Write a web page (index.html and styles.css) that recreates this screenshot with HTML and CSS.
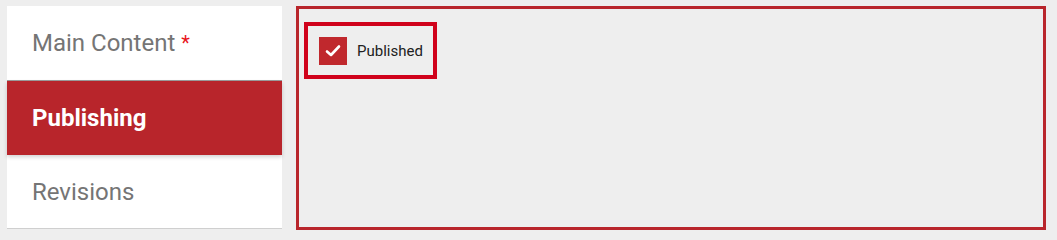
FILE: index.html
```html
<!DOCTYPE html>
<html>
<head>
<meta charset="utf-8">
<link rel="stylesheet" href="styles.css">
</head>
<body>
<div class="layout">
  <nav class="tabs">
    <div class="tab">Main Content <span class="req">*</span></div>
    <div class="tab active">Publishing</div>
    <div class="tab">Revisions</div>
  </nav>
  <section class="panel">
    <label class="field">
      <span class="box">
        <svg width="28" height="28" viewBox="0 0 28 28"><path d="M8 14.5 L12 18 L20 9.5" fill="none" stroke="#fff" stroke-width="2.6" stroke-linecap="round" stroke-linejoin="round"/></svg>
      </span>
      <span class="label">Published</span>
    </label>
  </section>
</div>
</body>
</html>
```
FILE: styles.css
```css
html, body {
  margin: 0;
  padding: 0;
  background: #eeeeee;
}
body {
  padding: 6px 11px 0 7px;
  font-family: Roboto, "Liberation Sans", sans-serif;
}
.layout {
  display: flex;
  gap: 14px;
  align-items: flex-start;
}
.tabs {
  width: 275px;
  background: #fff;
  display: flex;
  flex-direction: column;
}
.tab {
  height: 74px;
  display: flex;
  align-items: center;
  padding-left: 25px;
  font-size: 24px;
  color: #757575;
  box-sizing: border-box;
}
.tab:first-child {
  height: 75px;
  border-bottom: 1px solid #9e9e9e;
}
.tab:last-child {
  border-bottom: 1px solid #cfcfcf;
}
.tab.active {
  background: #b8252b;
  color: #fff;
  font-weight: 700;
  box-shadow: 0 2px 4px rgba(0,0,0,0.18);
  position: relative;
}
.req {
  color: #e8141c;
  font-size: 20px;
  margin-left: 6px;
  align-self: flex-start;
  margin-top: 25px;
}
.panel {
  flex: 1;
  height: 224px;
  box-sizing: border-box;
  border: 3px solid #b8252b;
  padding: 13px 5px;
}
.field {
  display: inline-flex;
  align-items: center;
  gap: 10px;
  border: 4px solid #d0021b;
  padding: 11px 10px 10px 11px;
}
.box {
  width: 28px;
  height: 28px;
  background: #c0282d;
  display: block;
}
.box svg {
  display: block;
}
.label {
  font-size: 15px;
  color: #212121;
}
```
